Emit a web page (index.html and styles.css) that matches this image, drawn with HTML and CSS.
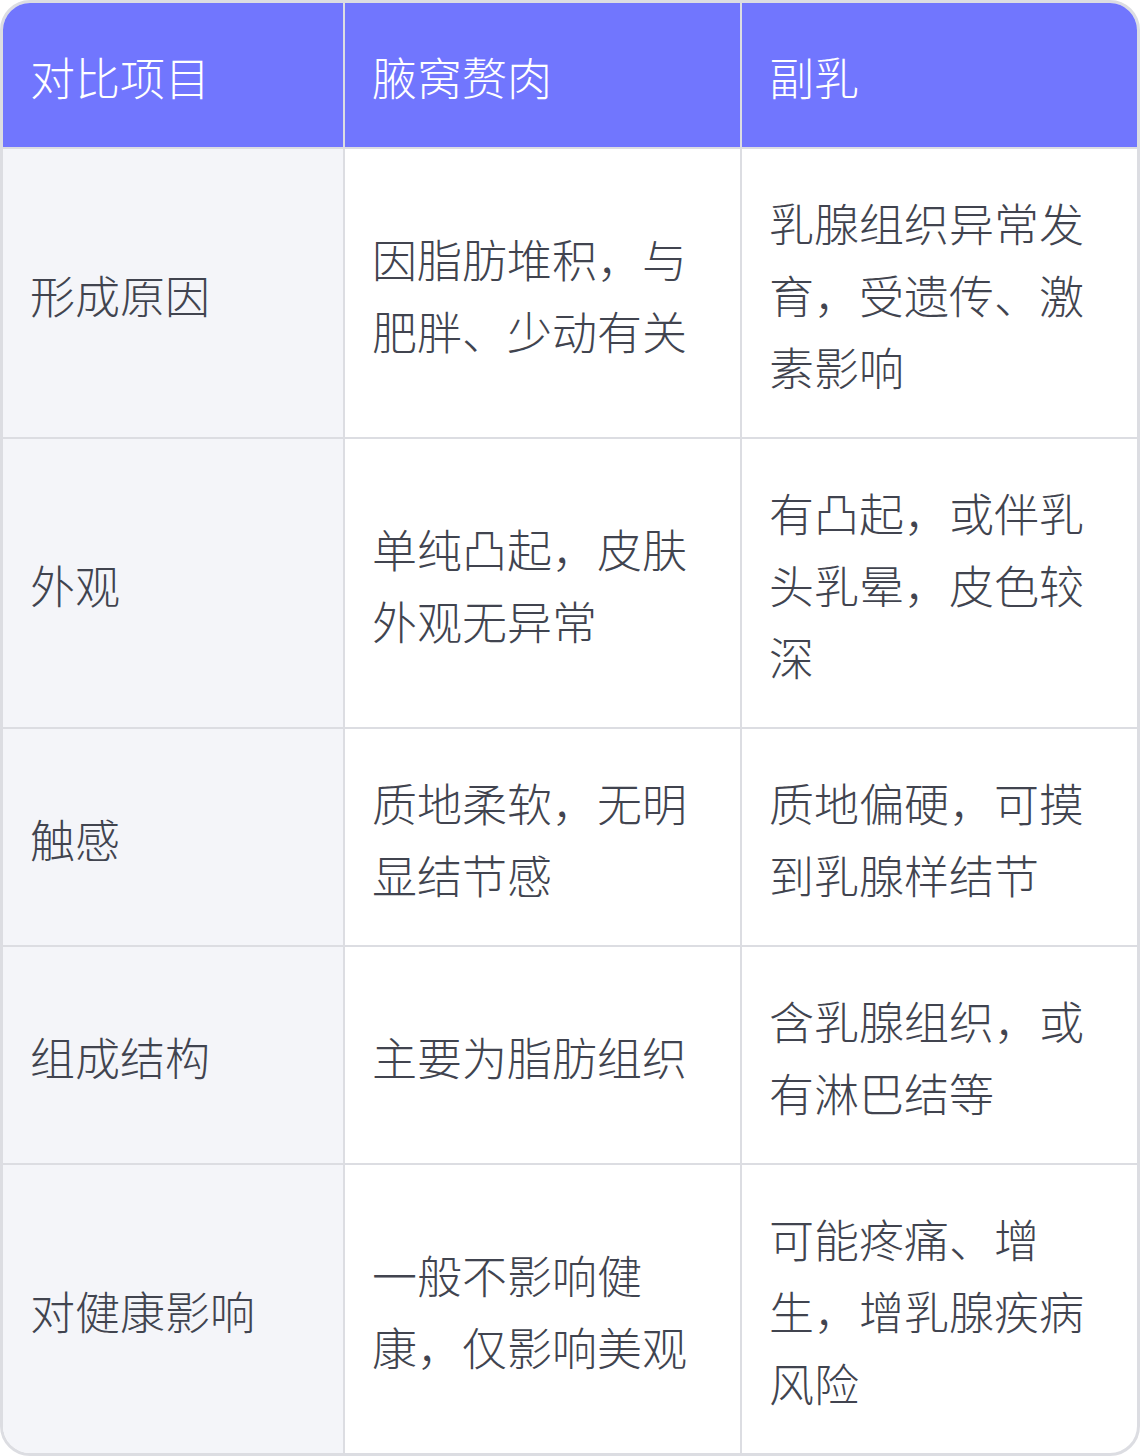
FILE: index.html
```html
<!DOCTYPE html>
<html lang="zh-CN">
<head>
<meta charset="utf-8">
<title>腋窝赘肉与副乳对比</title>
<link rel="stylesheet" href="styles.css">
</head>
<body>
<div class="card">
  <table class="cmp">
    <colgroup>
      <col class="c1">
      <col class="c2">
      <col class="c3">
    </colgroup>
    <thead>
      <tr><th>对比项目</th><th>腋窝赘肉</th><th>副乳</th></tr>
    </thead>
    <tbody>
      <tr><td>形成原因</td><td>因脂肪堆积，与肥胖、少动有关</td><td>乳腺组织异常发育，受遗传、激素影响</td></tr>
      <tr><td>外观</td><td>单纯凸起，皮肤外观无异常</td><td>有凸起，或伴乳头乳晕，皮色较深</td></tr>
      <tr><td>触感</td><td>质地柔软，无明显结节感</td><td>质地偏硬，可摸到乳腺样结节</td></tr>
      <tr><td>组成结构</td><td>主要为脂肪组织</td><td>含乳腺组织，或有淋巴结等</td></tr>
      <tr><td>对健康影响</td><td>一般不影响健康，仅影响美观</td><td>可能疼痛、增生，增乳腺疾病风险</td></tr>
    </tbody>
  </table>
</div>
</body>
</html>
```

FILE: styles.css
```css
html, body {
  margin: 0;
  padding: 0;
  background: #ffffff;
}

.card {
  width: 1140px;
  box-sizing: border-box;
  border: 3px solid #dcdde2;
  border-radius: 30px;
  overflow: hidden;
  background: #ffffff;
}

.cmp {
  width: 1134px;
  border-collapse: separate;
  border-spacing: 0;
  table-layout: fixed;
  font-family: "Noto Sans CJK SC", "Noto Sans", sans-serif;
  font-size: 45px;
  line-height: 72px;
  font-weight: 300;
  color: #41444f;
}

.c1 { width: 342px; }
.c2 { width: 397px; }
.c3 { width: 395px; }

.cmp th,
.cmp td {
  padding: 38px 26px 34px 27px;
  text-align: left;
  vertical-align: middle;
  border-right: 2px solid #dcdde2;
  border-bottom: 2px solid #dcdde2;
  font-weight: 300;
  word-break: break-all;
}

.cmp th:last-child,
.cmp td:last-child {
  border-right: none;
}

.cmp tbody tr:last-child td {
  border-bottom: none;
}

.cmp th {
  background: #7176fe;
  color: #ffffff;
}

.cmp td:first-child {
  background: #f4f5f9;
}
```
